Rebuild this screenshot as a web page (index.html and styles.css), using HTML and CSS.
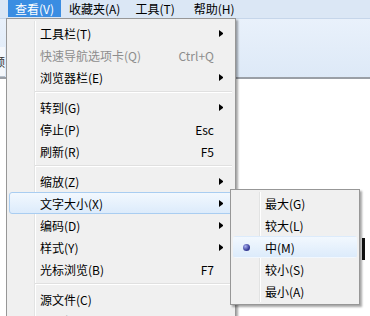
FILE: index.html
```html
<!DOCTYPE html>
<html lang="zh-CN">
<head>
<meta charset="utf-8">
<link rel="stylesheet" href="styles.css">
</head>
<body>
<div class="page">
  <div class="menubar">
    <span class="mb-item active">查看(V)</span>
    <span class="mb-item">收藏夹(A)</span>
    <span class="mb-item">工具(T)</span>
    <span class="mb-item last">帮助(H)</span>
  </div>
  <div class="toolbar">
    <div class="tab"><span class="tab-text">频</span></div>
  </div>
  <div class="content">
    <div class="mark"></div>
  </div>

  <div class="menu main-menu">
    <div class="gutter-line"></div>
    <div class="item"><span class="label">工具栏(T)</span><span class="key"></span><span class="arrow"></span></div>
    <div class="item disabled"><span class="label">快速导航选项卡(Q)</span><span class="key">Ctrl+Q</span><span class="noarrow"></span></div>
    <div class="item"><span class="label">浏览器栏(E)</span><span class="key"></span><span class="arrow"></span></div>
    <div class="sep"></div>
    <div class="item"><span class="label">转到(G)</span><span class="key"></span><span class="arrow"></span></div>
    <div class="item"><span class="label">停止(P)</span><span class="key">Esc</span><span class="noarrow"></span></div>
    <div class="item"><span class="label">刷新(R)</span><span class="key">F5</span><span class="noarrow"></span></div>
    <div class="sep"></div>
    <div class="item"><span class="label">缩放(Z)</span><span class="key"></span><span class="arrow"></span></div>
    <div class="item hover"><span class="label">文字大小(X)</span><span class="key"></span><span class="arrow"></span></div>
    <div class="item"><span class="label">编码(D)</span><span class="key"></span><span class="arrow"></span></div>
    <div class="item"><span class="label">样式(Y)</span><span class="key"></span><span class="arrow"></span></div>
    <div class="item"><span class="label">光标浏览(B)</span><span class="key">F7</span><span class="noarrow"></span></div>
    <div class="sep"></div>
    <div class="item"><span class="label">源文件(C)</span><span class="key"></span><span class="noarrow"></span></div>
    <div class="item"><span class="label">安全报告(S)</span><span class="key"></span><span class="noarrow"></span></div>
  </div>

  <div class="menu sub-menu">
    <div class="gutter-line sub-gutter"></div>
    <div class="sitem"><span class="icon"></span><span class="label">最大(G)</span></div>
    <div class="sitem"><span class="icon"></span><span class="label">较大(L)</span></div>
    <div class="sitem hover"><span class="icon"><span class="dot"></span></span><span class="label">中(M)</span></div>
    <div class="sitem"><span class="icon"></span><span class="label">较小(S)</span></div>
    <div class="sitem"><span class="icon"></span><span class="label">最小(A)</span></div>
  </div>
</div>
</body>
</html>
```

FILE: styles.css
```css
* { box-sizing: border-box; }
html, body { margin: 0; padding: 0; }
body {
  font-family: "Noto Sans CJK SC", "Noto Sans", sans-serif;
  font-size: 12px;
  color: #000;
  background: #fff;
}
.page {
  position: relative;
  width: 370px;
  height: 316px;
  overflow: hidden;
}
.menubar {
  height: 18px;
  background: #dbe7f5;
  display: flex;
  padding-left: 8px;
}
.mb-item {
  display: flex;
  align-items: center;
  padding: 0 7px;
  height: 17px;
  line-height: 17px;
  margin-right: 1px;
}
.mb-item.last { margin-left: 4px; }
.mb-item.active {
  background: #3a8de2;
  color: #fff;
}
.toolbar {
  height: 61px;
  background: linear-gradient(#e9f1fb, #dde9f7);
  border-top: 1px solid #c6d6ea;
  border-bottom: 2px solid #9a9fa6;
  display: flex;
  align-items: flex-end;
}
.tab {
  width: 5px;
  height: 30px;
  overflow: hidden;
  background: #f4f7fb;
  border-bottom: 1px solid #b8c2ce;
  display: flex;
  justify-content: flex-end;
  align-items: center;
}
.tab-text {
  flex: none;
  font-size: 12px;
  color: #333;
}
.content {
  height: 237px;
  background: #fff;
  padding-top: 159px;
}
.mark {
  margin-left: 362px;
  width: 3px;
  height: 22px;
  background: #111;
}

.menu {
  position: absolute;
  background: #f0f0f0;
  border: 1px solid #979797;
  box-shadow: 2px 2px 2px rgba(0, 0, 0, 0.35);
  padding: 3px 2px;
}
.main-menu {
  left: 6px;
  top: 18px;
  width: 230px;
  height: 330px;
}
.gutter-line {
  position: absolute;
  top: 2px;
  bottom: 2px;
  left: 27px;
  width: 2px;
  border-left: 1px solid #e2e3e3;
  border-right: 1px solid #ffffff;
}
.item {
  position: relative;
  height: 22px;
  display: flex;
  align-items: center;
  padding-left: 30px;
  padding-right: 9px;
  border: 1px solid transparent;
  border-radius: 3px;
}
.item .label { flex: 1; white-space: nowrap; }
.item .key { white-space: nowrap; margin-right: 5px; }
.arrow, .noarrow {
  width: 4px;
  height: 7px;
  flex: none;
}
.arrow {
  border-left: 4px solid #000;
  border-top: 3.5px solid transparent;
  border-bottom: 3.5px solid transparent;
}
.item.disabled { color: #8d8d8d; }
.hover {
  background: linear-gradient(#f2f8fe, #dcebfb);
  border: 1px solid #a9cdf1;
  border-radius: 3px;
}
.sep {
  height: 8px;
  margin-left: 26px;
  margin-right: 1px;
  display: flex;
  flex-direction: column;
  justify-content: center;
  position: relative;
}
.sep::before {
  content: "";
  display: block;
  height: 1px;
  background: #e0e0e0;
}
.sep::after {
  content: "";
  display: block;
  height: 1px;
  background: #ffffff;
}
.sub-menu {
  left: 230px;
  top: 189px;
  width: 130px;
  height: 116px;
  padding-top: 2px;
}
.sub-gutter { left: 28px; }
.sitem {
  position: relative;
  height: 22px;
  display: flex;
  align-items: center;
  border: 1px solid transparent;
}
.sitem .icon {
  width: 31px;
  height: 20px;
  flex: none;
  display: flex;
  align-items: center;
  justify-content: center;
  padding-right: 6px;
}
.sitem .label { white-space: nowrap; }
.dot {
  width: 7px;
  height: 7px;
  border-radius: 50%;
  background: radial-gradient(circle at 35% 35%, #aab0f0, #3a3f9a 60%, #1f2370);
}
```
